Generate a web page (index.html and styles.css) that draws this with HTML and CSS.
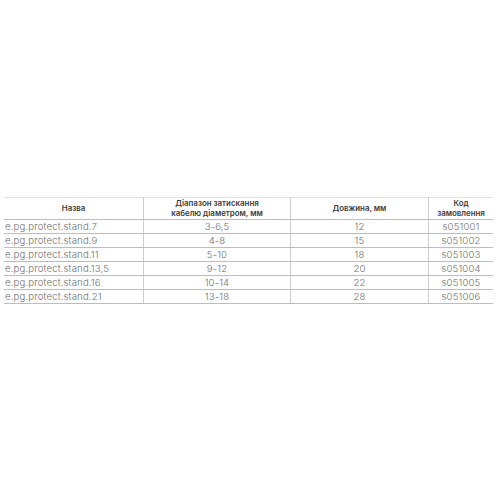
FILE: index.html
```html
<!DOCTYPE html>
<html lang="uk">
<head>
<meta charset="utf-8">
<link rel="stylesheet" href="styles.css">
</head>
<body>
<div class="page">
<table class="spec">
  <thead>
    <tr>
      <th class="c-name">Назва</th>
      <th class="c-range">Діапазон затискання<br>кабелю діаметром, мм</th>
      <th class="c-len">Довжина, мм</th>
      <th class="c-code">Код<br>замовлення</th>
    </tr>
  </thead>
  <tbody>
    <tr><td class="name">e.pg.protect.stand.7</td><td>3-6,5</td><td>12</td><td>s051001</td></tr>
    <tr><td class="name">e.pg.protect.stand.9</td><td>4-8</td><td>15</td><td>s051002</td></tr>
    <tr><td class="name">e.pg.protect.stand.11</td><td>5-10</td><td>18</td><td>s051003</td></tr>
    <tr><td class="name">e.pg.protect.stand.13,5</td><td>9-12</td><td>20</td><td>s051004</td></tr>
    <tr><td class="name">e.pg.protect.stand.16</td><td>10-14</td><td>22</td><td>s051005</td></tr>
    <tr><td class="name">e.pg.protect.stand.21</td><td>13-18</td><td>28</td><td>s051006</td></tr>
  </tbody>
</table>
</div>
</body>
</html>
```
FILE: styles.css
```css
html, body {
  margin: 0;
  padding: 0;
  background: #ffffff;
}
.page {
  padding: 197px 9px 0 4px;
}
.spec {
  width: 487px;
  border-collapse: collapse;
  table-layout: fixed;
  font-family: Inter, "Open Sans", sans-serif;
}
.spec th, .spec td {
  padding: 0;
  text-align: center;
  border-left: 1px solid #cfcfcf;
  border-bottom: 1px solid #bdbdbd;
}
.spec th:first-child, .spec td:first-child {
  border-left: none;
}
.spec thead tr {
  border-top: 1px solid #e4e4e4;
}
.spec th {
  height: 21px;
  font-size: 7.9px;
  line-height: 9.5px;
  font-weight: 600;
  color: #3a3a3a;
}
.c-name { width: 139px; }
.c-range { width: 146px; }
.c-len { width: 137px; }
.c-code { width: 64px; }
.spec td {
  height: 13px;
  font-size: 9.6px;
  line-height: 13px;
  letter-spacing: 0.15px;
  font-weight: 300;
  color: #6f6f6f;
}
.spec td.name {
  text-align: left;
  padding-left: 1px;
}
```
